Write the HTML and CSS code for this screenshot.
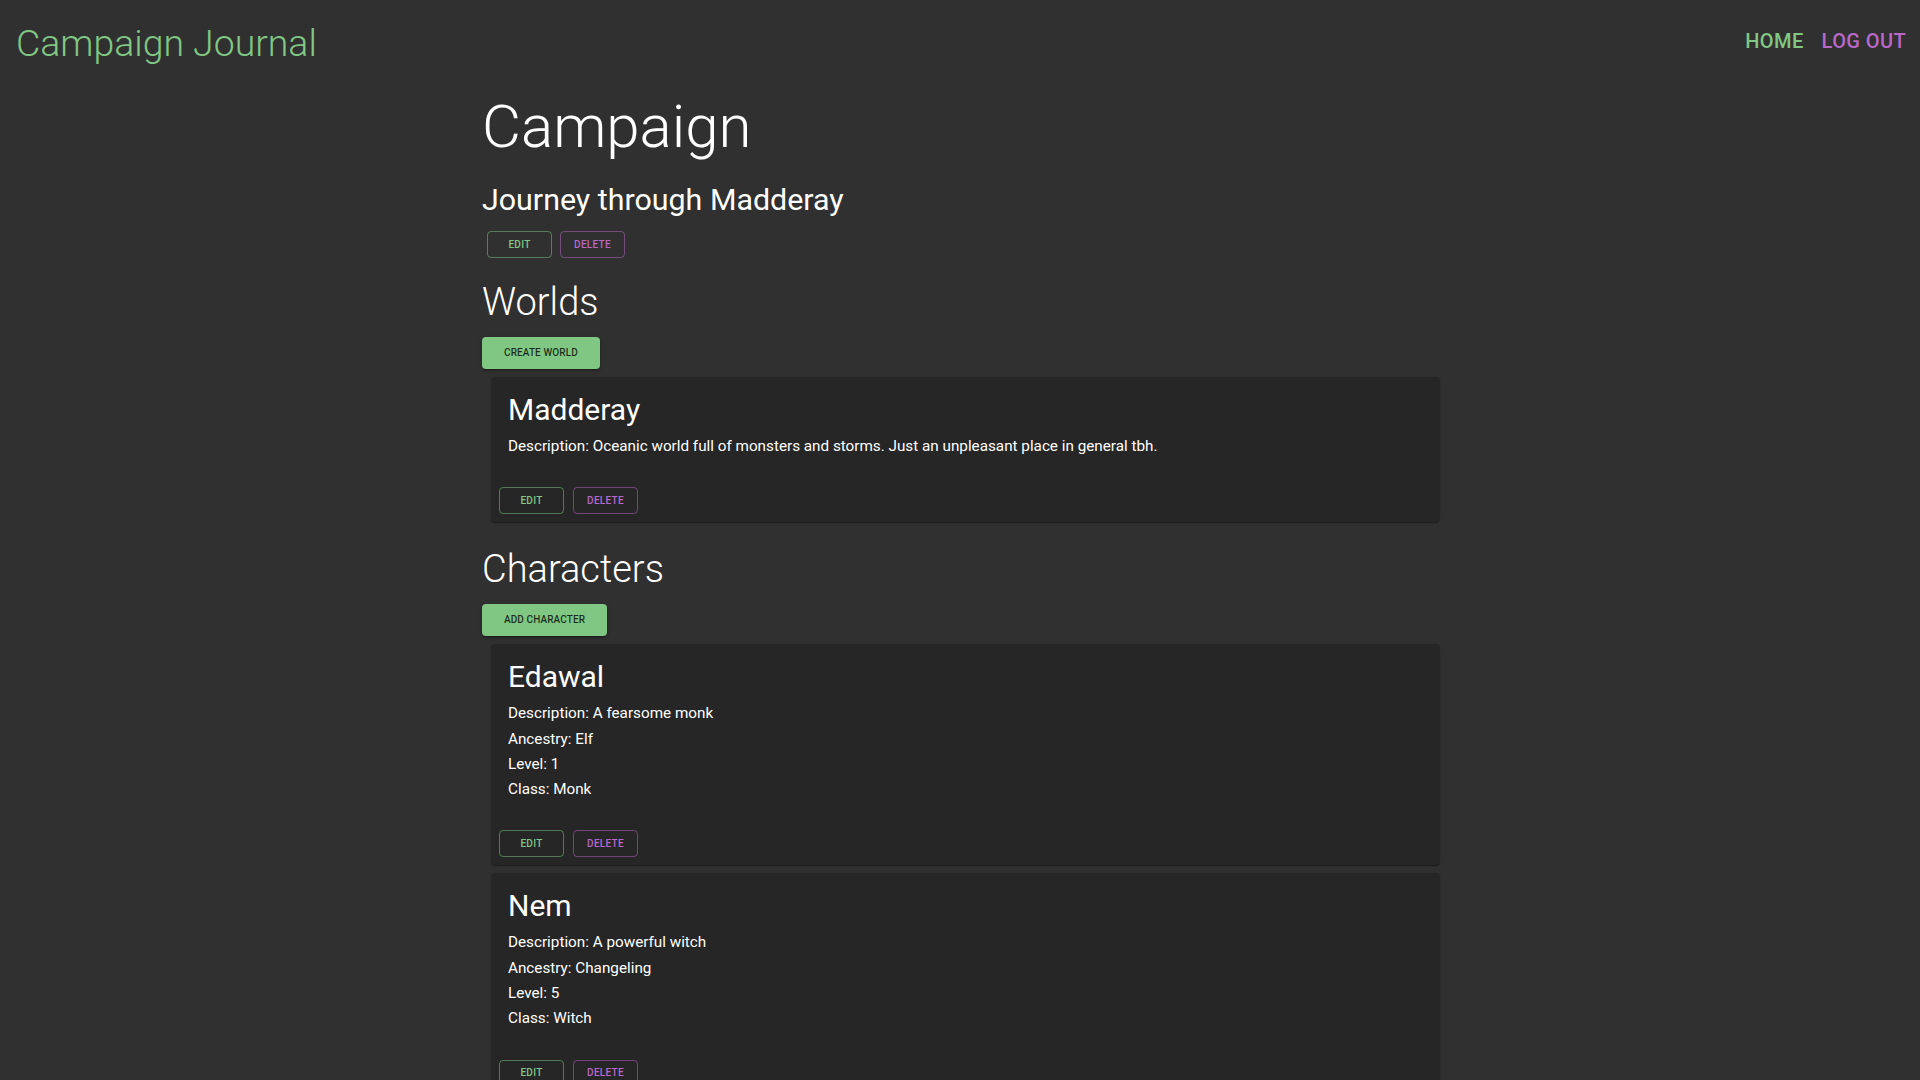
FILE: index.html
```html
<!DOCTYPE html>
<html lang="en">
<head>
<meta charset="utf-8">
<title>Campaign Journal</title>
<link rel="stylesheet" href="styles.css">
</head>
<body>
<header class="topbar">
  <div class="brand">Campaign Journal</div>
  <nav class="nav">
    <a class="nav-link nav-home" href="#">Home</a>
    <a class="nav-link nav-logout" href="#">Log out</a>
  </nav>
</header>
<main class="main">
  <h1 class="page-title">Campaign</h1>
  <h2 class="campaign-name">Journey through Madderay</h2>
  <div class="top-actions">
    <button class="btn btn-outline btn-green">Edit</button>
    <button class="btn btn-outline btn-purple">Delete</button>
  </div>

  <h2 class="section-title">Worlds</h2>
  <button class="btn btn-contained">Create World</button>
  <div class="card-list">
    <article class="card">
      <div class="card-content">
        <h3 class="card-title">Madderay</h3>
        <p class="card-line">Description: Oceanic world full of monsters and storms. Just an unpleasant place in general tbh.</p>
      </div>
      <div class="card-actions">
        <button class="btn btn-outline btn-green">Edit</button>
        <button class="btn btn-outline btn-purple">Delete</button>
      </div>
    </article>
  </div>

  <h2 class="section-title section-characters">Characters</h2>
  <button class="btn btn-contained">Add Character</button>
  <div class="card-list">
    <article class="card">
      <div class="card-content">
        <h3 class="card-title">Edawal</h3>
        <p class="card-line">Description: A fearsome monk</p>
        <p class="card-line">Ancestry: Elf</p>
        <p class="card-line">Level: 1</p>
        <p class="card-line">Class: Monk</p>
      </div>
      <div class="card-actions">
        <button class="btn btn-outline btn-green">Edit</button>
        <button class="btn btn-outline btn-purple">Delete</button>
      </div>
    </article>
    <article class="card">
      <div class="card-content">
        <h3 class="card-title">Nem</h3>
        <p class="card-line">Description: A powerful witch</p>
        <p class="card-line">Ancestry: Changeling</p>
        <p class="card-line">Level: 5</p>
        <p class="card-line">Class: Witch</p>
      </div>
      <div class="card-actions">
        <button class="btn btn-outline btn-green">Edit</button>
        <button class="btn btn-outline btn-purple">Delete</button>
      </div>
    </article>
  </div>
</main>
</body>
</html>
```
FILE: styles.css
```css
* { box-sizing: border-box; }

html, body {
  margin: 0;
  padding: 0;
  background: #303030;
  color: #ffffff;
  font-family: Roboto, "Liberation Sans", Arial, sans-serif;
}

.topbar {
  display: flex;
  justify-content: space-between;
  align-items: flex-start;
  padding: 18.5px 14px 0 16px;
}

.brand {
  font-size: 37.4px;
  line-height: 48px;
  font-weight: 300;
  color: #81c784;
}

.nav {
  display: flex;
  gap: 18px;
  margin-top: 10.5px;
}

.nav-link {
  font-size: 20px;
  line-height: 24px;
  font-weight: 500;
  text-transform: uppercase;
  letter-spacing: 0.4px;
  text-decoration: none;
}

.nav-home { color: #81c784; }
.nav-logout { color: #ba68c8; }

.main {
  margin-left: 482px;
  width: 958px;
  display: flex;
  flex-direction: column;
  align-items: flex-start;
}

.page-title {
  margin: 24.5px 0 0;
  font-size: 60px;
  line-height: 72px;
  font-weight: 300;
}

.campaign-name {
  margin: 20px 0 0;
  font-size: 30.4px;
  line-height: 34px;
  font-weight: 400;
}

.top-actions {
  display: flex;
  gap: 8px;
  margin: 14px 0 0 5px;
}

.section-title {
  margin: 19.5px 0 0;
  font-size: 38px;
  line-height: 48px;
  font-weight: 300;
}

.section-characters { margin-top: 22.5px; }

.btn {
  font-family: Roboto, "Liberation Sans", Arial, sans-serif;
  text-transform: uppercase;
  font-weight: 500;
  border-radius: 4px;
  cursor: pointer;
  min-width: 65px;
}

.btn-outline {
  background: transparent;
  font-size: 10px;
  line-height: 16px;
  padding: 4px 10px;
  height: 27px;
  letter-spacing: 0.3px;
}

.btn-green {
  color: #81c784;
  border: 1px solid rgba(129, 199, 132, 0.5);
}

.btn-purple {
  color: #ba68c8;
  border: 1px solid rgba(186, 104, 200, 0.5);
}

.btn-contained {
  margin-top: 11.5px;
  background: #81c784;
  color: rgba(0, 0, 0, 0.78);
  border: none;
  font-size: 10px;
  line-height: 16px;
  height: 32px;
  padding: 8px 22px;
  letter-spacing: 0.1px;
  box-shadow: 0 3px 1px -2px rgba(0,0,0,0.2), 0 2px 2px 0 rgba(0,0,0,0.14), 0 1px 5px 0 rgba(0,0,0,0.12);
}

.card-list {
  display: flex;
  flex-direction: column;
  gap: 8px;
  margin: 8px 0 0 9px;
  align-self: stretch;
}

.card {
  background: #262626;
  border-radius: 4px;
  box-shadow: 0 2px 1px -1px rgba(0,0,0,0.2), 0 1px 1px 0 rgba(0,0,0,0.14), 0 1px 3px 0 rgba(0,0,0,0.12);
}

.card-content {
  padding: 16px 16px 20px 17px;
}

.card-title {
  margin: 0 0 7px;
  font-size: 30px;
  line-height: 34px;
  font-weight: 400;
}

.card-line {
  margin: 0;
  font-size: 15.25px;
  line-height: 25.3px;
  font-weight: 400;
}

.card-actions {
  display: flex;
  gap: 9px;
  padding: 8px;
}
```
